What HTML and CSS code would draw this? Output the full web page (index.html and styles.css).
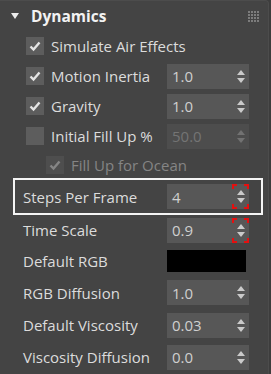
FILE: index.html
```html
<!DOCTYPE html>
<html>
<head>
<meta charset="utf-8">
<link rel="stylesheet" href="styles.css">
</head>
<body>
<div class="panel">
  <div class="header">
    <span class="tri"></span>
    <span class="title">Dynamics</span>
    <span class="grip"><i></i><i></i><i></i><i></i><i></i><i></i><i></i><i></i><i></i><i></i><i></i><i></i><i></i><i></i><i></i><i></i></span>
  </div>
  <div class="rows">
    <div class="row chk r30">
      <span class="box"><svg viewBox="0 0 12 12" width="12" height="12"><path d="M1.5 6.5 L4.5 9.5 L10.5 2.5" fill="none" stroke="#e4e4e4" stroke-width="2.4"/></svg></span>
      <span class="label">Simulate Air Effects</span>
    </div>
    <div class="row chk r30">
      <span class="box"><svg viewBox="0 0 12 12" width="12" height="12"><path d="M1.5 6.5 L4.5 9.5 L10.5 2.5" fill="none" stroke="#e4e4e4" stroke-width="2.4"/></svg></span>
      <span class="label">Motion Inertia</span>
      <span class="spin"><span class="val">1.0</span><span class="arr"></span></span>
    </div>
    <div class="row chk r30">
      <span class="box"><svg viewBox="0 0 12 12" width="12" height="12"><path d="M1.5 6.5 L4.5 9.5 L10.5 2.5" fill="none" stroke="#e4e4e4" stroke-width="2.4"/></svg></span>
      <span class="label">Gravity</span>
      <span class="spin"><span class="val">1.0</span><span class="arr"></span></span>
    </div>
    <div class="row chk r30">
      <span class="box"></span>
      <span class="label">Initial Fill Up %</span>
      <span class="spin dis"><span class="val">50.0</span><span class="arr"></span></span>
    </div>
    <div class="row chk sub dis r27">
      <span class="box"><svg viewBox="0 0 12 12" width="12" height="12"><path d="M1.5 6.5 L4.5 9.5 L10.5 2.5" fill="none" stroke="#858585" stroke-width="2.4"/></svg></span>
      <span class="label">Fill Up for Ocean</span>
    </div>
    <div class="row plain hl">
      <span class="label">Steps Per Frame</span>
      <span class="spin"><span class="val">4</span><span class="arr mark"></span></span>
    </div>
    <div class="row plain r30">
      <span class="label">Time Scale</span>
      <span class="spin"><span class="val">0.9</span><span class="arr mark"></span></span>
    </div>
    <div class="row plain r32">
      <span class="label">Default RGB</span>
      <span class="swatch"></span>
    </div>
    <div class="row plain r31">
      <span class="label">RGB Diffusion</span>
      <span class="spin"><span class="val">1.0</span><span class="arr"></span></span>
    </div>
    <div class="row plain r34">
      <span class="label">Default Viscosity</span>
      <span class="spin"><span class="val">0.03</span><span class="arr"></span></span>
    </div>
    <div class="row plain r30">
      <span class="label">Viscosity Diffusion</span>
      <span class="spin"><span class="val">0.0</span><span class="arr"></span></span>
    </div>
  </div>
</div>
</body>
</html>
```
FILE: styles.css
```css
html, body {
  margin: 0;
  padding: 0;
  background: #3d3d3d;
}
body {
  width: 271px;
  height: 374px;
  overflow: hidden;
  font-family: "Open Sans", "Noto Sans", sans-serif;
  color: #dcdcdc;
}
.panel {
  box-sizing: border-box;
  width: 269px;
  height: 380px;
  background: #444444;
  border-top: 1px solid #4c4c4c;
  border-right: 1px solid #4c4c4c;
  border-radius: 0 4px 0 0;
}
.header {
  display: flex;
  align-items: center;
  height: 30px;
  padding-left: 11px;
  padding-right: 9px;
}
.tri {
  width: 0;
  height: 0;
  border-left: 4px solid transparent;
  border-right: 4px solid transparent;
  border-top: 6px solid #ececec;
  margin-right: 12px;
}
.title {
  font-weight: bold;
  font-size: 15.5px;
  color: #f2f2f2;
  flex: 1;
}
.grip {
  display: grid;
  grid-template-columns: repeat(4, 2px);
  gap: 1px;
}
.grip i {
  width: 2px;
  height: 2px;
  background: #7c7c7c;
}
.rows {
  display: flex;
  flex-direction: column;
}
.row {
  display: flex;
  align-items: center;
  font-size: 15px;
}
.r27 { height: 27px; }
.r30 { height: 30px; }
.r31 { height: 31px; }
.r32 { height: 32px; }
.r34 { height: 34px; }
.row.chk {
  padding-left: 26px;
}
.row.sub {
  padding-left: 46px;
}
.row.plain {
  padding-left: 23px;
}
.box {
  box-sizing: border-box;
  width: 18px;
  height: 18px;
  background: #5d5d5d;
  display: flex;
  align-items: center;
  justify-content: center;
  margin-right: 7px;
}
.dis .box {
  background: #4e4e4e;
}
.dis .label {
  color: #858585;
}
.label {
  flex: 1;
  white-space: nowrap;
}
.spin {
  box-sizing: border-box;
  width: 82px;
  height: 25px;
  margin-right: 19px;
  background: #575757;
  display: flex;
  align-items: center;
  padding-left: 5px;
  color: #cfcfcf;
}
.spin.dis {
  background: #4d4d4d;
  color: #747474;
}
.val {
  flex: 1;
}
.arr {
  position: relative;
  width: 17px;
  height: 25px;
}
.arr::before, .arr::after {
  content: "";
  position: absolute;
  left: 5px;
  width: 0;
  height: 0;
  border-left: 4px solid transparent;
  border-right: 4px solid transparent;
}
.arr::before {
  top: 6px;
  border-bottom: 5px solid #cacaca;
}
.arr::after {
  top: 14px;
  border-top: 5px solid #cacaca;
}
.spin.dis .arr::before { border-bottom-color: #727272; }
.spin.dis .arr::after { border-top-color: #727272; }
.arr.mark {
  background:
    linear-gradient(#e41010, #e41010) left top / 5px 2px no-repeat,
    linear-gradient(#e41010, #e41010) left top / 2px 5px no-repeat,
    linear-gradient(#e41010, #e41010) right top / 5px 2px no-repeat,
    linear-gradient(#e41010, #e41010) right top / 2px 5px no-repeat,
    linear-gradient(#e41010, #e41010) left bottom / 5px 2px no-repeat,
    linear-gradient(#e41010, #e41010) left bottom / 2px 5px no-repeat,
    linear-gradient(#e41010, #e41010) right bottom / 5px 2px no-repeat,
    linear-gradient(#e41010, #e41010) right bottom / 2px 5px no-repeat;
}
.hl {
  box-sizing: border-box;
  height: 37px;
  margin-left: 13px;
  width: 250px;
  padding-left: 8px !important;
  border: 2px solid #f4f4f4;
}
.hl .spin {
  margin-right: 12px;
}
.swatch {
  width: 79px;
  height: 22px;
  margin-right: 22px;
  background: #000;
}
```
